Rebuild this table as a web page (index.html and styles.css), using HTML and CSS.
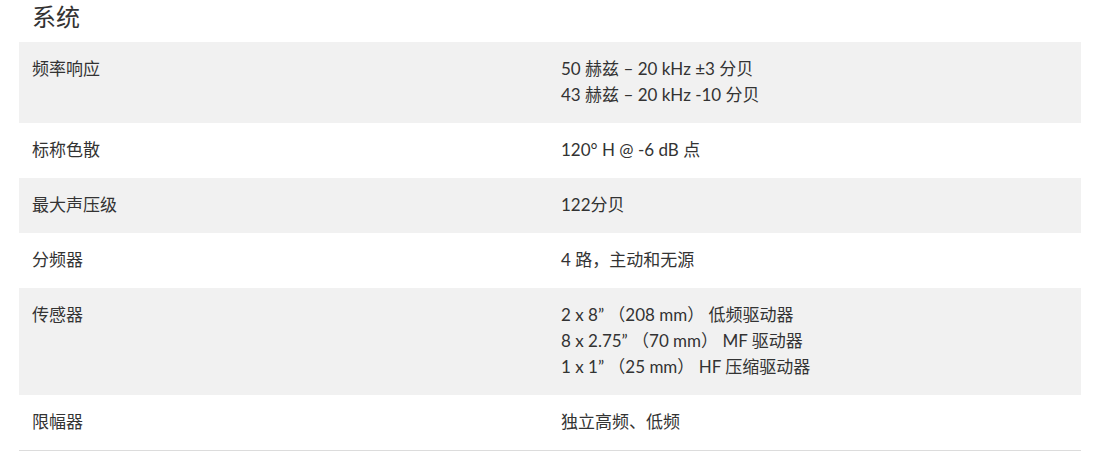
FILE: index.html
```html
<!DOCTYPE html>
<html lang="zh-CN">
<head>
<meta charset="utf-8">
<link rel="stylesheet" href="styles.css">
</head>
<body>
<div class="page">
  <h2 class="title">系统</h2>
  <div class="specs">
    <div class="row">
      <div class="label">频率响应</div>
      <div class="value">50 赫兹 – 20 kHz ±3 分贝<br>43 赫兹 – 20 kHz -10 分贝</div>
    </div>
    <div class="row">
      <div class="label">标称色散</div>
      <div class="value">120° H @ -6 dB 点</div>
    </div>
    <div class="row">
      <div class="label">最大声压级</div>
      <div class="value">122分贝</div>
    </div>
    <div class="row">
      <div class="label">分频器</div>
      <div class="value">4 路，主动和无源</div>
    </div>
    <div class="row">
      <div class="label">传感器</div>
      <div class="value">2 x 8” （208 mm） 低频驱动器<br>8 x 2.75” （70 mm） MF 驱动器<br>1 x 1” （25 mm） HF 压缩驱动器</div>
    </div>
    <div class="row">
      <div class="label">限幅器</div>
      <div class="value">独立高频、低频</div>
    </div>
  </div>
</div>
</body>
</html>
```
FILE: styles.css
```css
html, body {
  margin: 0;
  padding: 0;
  background: #fff;
}
body {
  font-family: Lato, "Noto Sans CJK SC", sans-serif;
  color: #333;
}
.page {
  padding: 0 18px 0 19px;
}
.title {
  margin: 0;
  padding: 0 13px;
  height: 42px;
  font-size: 24px;
  font-weight: 400;
  line-height: 33px;
  color: #333;
}
.specs {
  border-bottom: 1px solid #dcdcdc;
}
.row {
  display: grid;
  grid-template-columns: 529px 1fr;
  font-size: 17px;
  line-height: 26px;
}
.row:nth-child(odd) {
  background: #f1f1f1;
}
.label, .value {
  padding: 14px 13px 15px;
}
```
